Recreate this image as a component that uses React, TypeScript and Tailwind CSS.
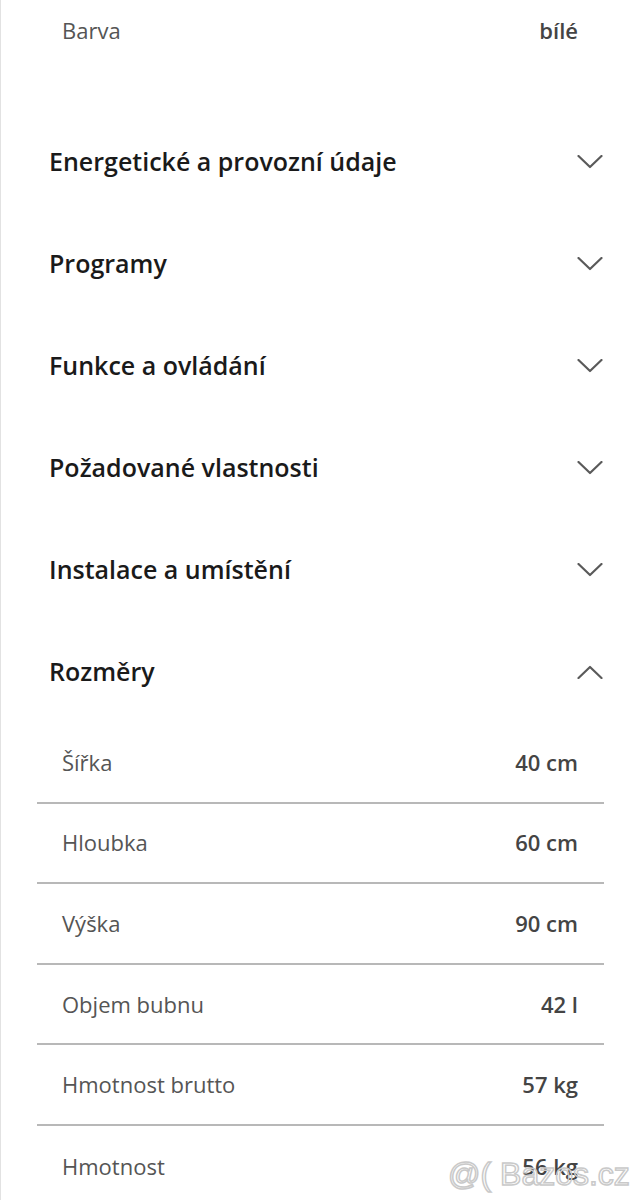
import React from 'react';

interface Spec {
  label: string;
  value: string;
}

const sections = [
  'Energetické a provozní údaje',
  'Programy',
  'Funkce a ovládání',
  'Požadované vlastnosti',
  'Instalace a umístění',
];

const dimensions: Spec[] = [
  { label: 'Šířka', value: '40 cm' },
  { label: 'Hloubka', value: '60 cm' },
  { label: 'Výška', value: '90 cm' },
  { label: 'Objem bubnu', value: '42 l' },
  { label: 'Hmotnost brutto', value: '57 kg' },
  { label: 'Hmotnost', value: '56 kg' },
];

const Chevron = ({ up = false }: { up?: boolean }) => (
  <svg width="26" height="14" viewBox="0 0 26 14" fill="none" className="shrink-0">
    <path
      d={up ? 'M1.5 13L13 2l11.5 11' : 'M1.5 1L13 12 24.5 1'}
      stroke="#5a5a5a"
      strokeWidth="2.2"
      strokeLinecap="round"
      strokeLinejoin="round"
    />
  </svg>
);

const SpecRow = ({ spec, last }: { spec: Spec; last?: boolean }) => (
  <div
    className={`h-[80.6px] flex items-center justify-between pl-[25px] pr-[26px] ${
      last ? '' : 'border-b-2 border-[#b8b8b8]'
    }`}
  >
    <span className="text-[22px] text-[#555]">{spec.label}</span>
    <span className="text-[22px] font-semibold text-[#444]">{spec.value}</span>
  </div>
);

const SectionHeader = ({ title, open }: { title: string; open?: boolean }) => (
  <div className="h-[102px] flex items-center justify-between pl-[12px] pr-[1px]">
    <span className="text-[25px] font-semibold text-[#1a1a1a]">{title}</span>
    <Chevron up={open} />
  </div>
);

export default function App() {
  return (
    <div className="relative w-[640px] h-[1200px] overflow-hidden bg-white border-l border-[#e2e2e2] font-['Open_Sans','Noto_Sans',sans-serif]">
      <div className="mx-[36px]">
        <div className="h-[60px] flex items-center justify-between pl-[25px] pr-[26px] mb-[51px]">
          <span className="text-[22px] text-[#555]">Barva</span>
          <span className="text-[22px] font-semibold text-[#444]">bílé</span>
        </div>

        {sections.map((s) => (
          <SectionHeader key={s} title={s} />
        ))}

        <SectionHeader title="Rozměry" open />
        {dimensions.map((d, i) => (
          <SpecRow key={d.label} spec={d} last={i === dimensions.length - 1} />
        ))}
      </div>

      <div className="absolute left-[447px] top-[1150px] text-[32px] font-['Liberation_Sans',sans-serif] text-transparent [-webkit-text-stroke:1.5px_#c9c9c9] whitespace-nowrap">
        @( Bazos.cz
      </div>
    </div>
  );
}
